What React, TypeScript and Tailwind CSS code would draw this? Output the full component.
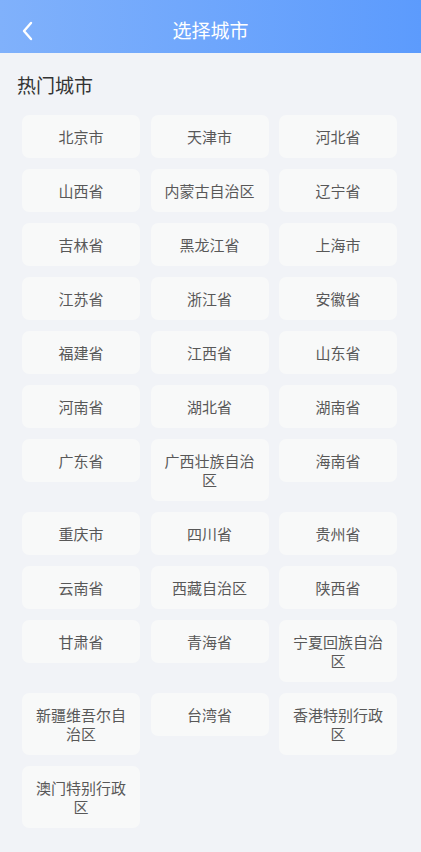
import React from 'react';

const cities = [
    '北京市', '天津市', '河北省', '山西省', '内蒙古自治区', '辽宁省',
    '吉林省', '黑龙江省', '上海市', '江苏省', '浙江省', '安徽省',
    '福建省', '江西省', '山东省', '河南省', '湖北省', '湖南省',
    '广东省', '广西壮族自治区', '海南省', '重庆市', '四川省', '贵州省',
    '云南省', '西藏自治区', '陕西省', '甘肃省', '青海省', '宁夏回族自治区',
    '新疆维吾尔自治区', '台湾省', '香港特别行政区', '澳门特别行政区',
];

const font = { fontFamily: '"Noto Sans CJK SC", "Noto Sans", sans-serif' };

export default function App() {
    return (
        <div className="min-h-[852px] w-[421px] bg-[#f1f3f7]" style={font}>
            <header className="relative flex h-[53px] items-center justify-center bg-gradient-to-r from-[#80b1fb] to-[#5c9bfd]">
                <button className="absolute left-[20px] top-[20px] text-white">
                    <svg width="16" height="22" viewBox="0 0 16 22" fill="none">
                        <path d="M11 3 L4 11 L11 19" stroke="white" strokeWidth="2.4" strokeLinecap="round" strokeLinejoin="round" />
                    </svg>
                </button>
                <h1 className="mt-[7px] text-[19px] leading-[26px] text-white">选择城市</h1>
            </header>

            <section className="pt-[19px]">
                <h2 className="pl-[17px] text-[19px] leading-[26px] text-[#333]">热门城市</h2>
                <div className="mt-[17px] grid grid-cols-3 items-start gap-x-[10.5px] gap-y-[11px] pl-[22px] pr-[24px] pb-[24px]">
                    {cities.map((city) => (
                        <div
                            key={city}
                            className="rounded-[7px] bg-[#f8f9f9] px-[12px] py-[12px] text-center text-[15px] leading-[19px] text-[#585858]"
                        >
                            {city}
                        </div>
                    ))}
                </div>
            </section>
        </div>
    );
}
